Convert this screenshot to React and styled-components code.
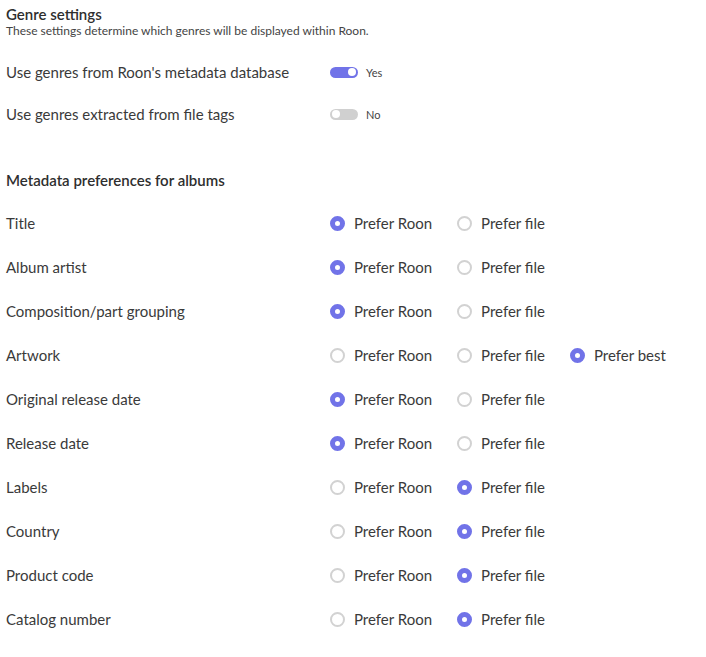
import React from 'react';
import styled, { createGlobalStyle } from 'styled-components';

const GlobalStyle = createGlobalStyle`
  body {
    margin: 0;
    background: #ffffff;
    font-family: Lato, "Noto Sans", sans-serif;
    color: #353535;
  }
`;

const Page = styled.div`
  padding: 5px 6px 0;
`;

const SectionTitle = styled.div`
  font-size: 15px;
  font-weight: 600;
  line-height: 19px;
  color: #2e2e2e;
`;

const SectionNote = styled.div`
  font-size: 12px;
  line-height: 14px;
  color: #444;
`;

const ToggleList = styled.div`
  margin-top: 13px;
  margin-bottom: 36px;
`;

const Row = styled.div`
  display: grid;
  grid-template-columns: 324px auto;
  align-items: center;
  height: ${(p) => p.$height}px;
`;

const Label = styled.div`
  font-size: 15px;
  line-height: 20px;
  color: #3a3a3a;
`;

const ToggleWrap = styled.div`
  display: flex;
  align-items: center;
  gap: 8px;
`;

const Track = styled.span`
  position: relative;
  width: 28px;
  height: 11px;
  border-radius: 6px;
  background: ${(p) => (p.$on ? '#7173e8' : '#d0d0d0')};
`;

const Knob = styled.span`
  position: absolute;
  top: 1.5px;
  left: ${(p) => (p.$on ? '18px' : '2px')};
  width: 8px;
  height: 8px;
  border-radius: 50%;
  background: #fff;
`;

const ToggleText = styled.span`
  font-size: 11px;
  color: #444;
`;

const RadioList = styled.div`
  margin-top: 11px;
`;

const Options = styled.div`
  display: flex;
  align-items: center;
  gap: 25px;
`;

const Option = styled.div`
  display: flex;
  align-items: center;
  gap: 9px;
  font-size: 15px;
  color: #3a3a3a;
  line-height: 20px;
`;

const Dot = styled.span`
  box-sizing: border-box;
  width: 15px;
  height: 15px;
  border-radius: 50%;
  border: ${(p) => (p.$checked ? '5px solid #7173e8' : '2px solid #d2d2d2')};
  background: #fff;
`;

const genreRows = [
  { label: "Use genres from Roon's metadata database", on: true },
  { label: 'Use genres extracted from file tags', on: false },
];

const albumRows = [
  { label: 'Title', value: 'roon' },
  { label: 'Album artist', value: 'roon' },
  { label: 'Composition/part grouping', value: 'roon' },
  { label: 'Artwork', value: 'best', best: true },
  { label: 'Original release date', value: 'roon' },
  { label: 'Release date', value: 'roon' },
  { label: 'Labels', value: 'file' },
  { label: 'Country', value: 'file' },
  { label: 'Product code', value: 'file' },
  { label: 'Catalog number', value: 'file' },
];

function Toggle({ on }) {
  return (
    <ToggleWrap>
      <Track $on={on}>
        <Knob $on={on} />
      </Track>
      <ToggleText>{on ? 'Yes' : 'No'}</ToggleText>
    </ToggleWrap>
  );
}

function RadioOption({ checked, children }) {
  return (
    <Option>
      <Dot $checked={checked} />
      {children}
    </Option>
  );
}

export default function App() {
  return (
    <>
      <GlobalStyle />
      <Page>
        <SectionTitle>Genre settings</SectionTitle>
        <SectionNote>These settings determine which genres will be displayed within Roon.</SectionNote>
        <ToggleList>
          {genreRows.map((r) => (
            <Row key={r.label} $height={42}>
              <Label>{r.label}</Label>
              <Toggle on={r.on} />
            </Row>
          ))}
        </ToggleList>

        <SectionTitle>Metadata preferences for albums</SectionTitle>
        <RadioList>
          {albumRows.map((r) => (
            <Row key={r.label} $height={44}>
              <Label>{r.label}</Label>
              <Options>
                <RadioOption checked={r.value === 'roon'}>Prefer Roon</RadioOption>
                <RadioOption checked={r.value === 'file'}>Prefer file</RadioOption>
                {r.best && <RadioOption checked={r.value === 'best'}>Prefer best</RadioOption>}
              </Options>
            </Row>
          ))}
        </RadioList>
      </Page>
    </>
  );
}
